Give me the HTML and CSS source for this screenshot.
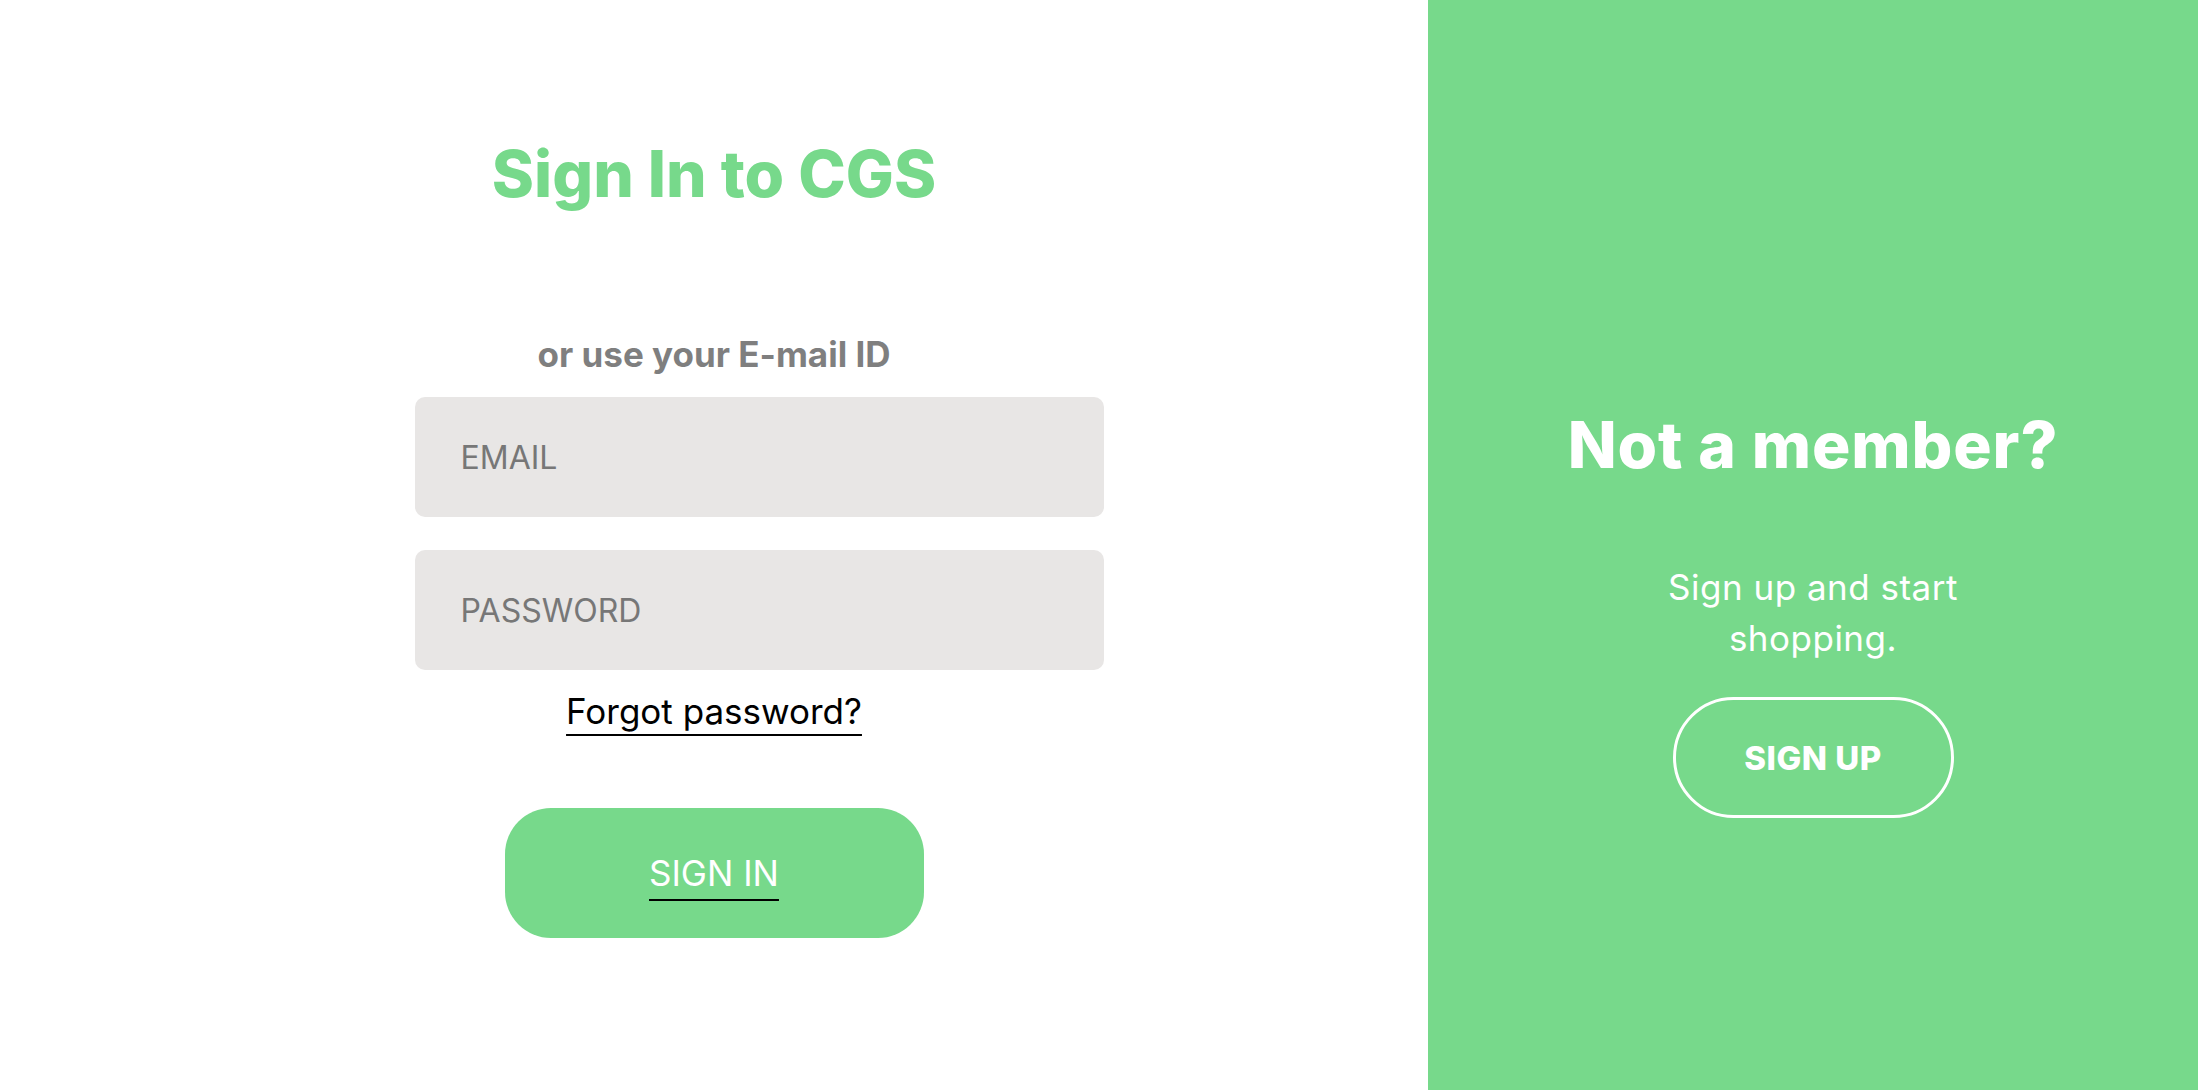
FILE: index.html
```html
<!DOCTYPE html>
<html lang="en">
<head>
<meta charset="utf-8">
<title>Sign In to CGS</title>
<link rel="stylesheet" href="styles.css">
</head>
<body>
<main class="page">
  <section class="signin">
    <h1 class="title">Sign In to CGS</h1>
    <p class="subtitle">or use your E-mail ID</p>
    <form class="fields">
      <div class="field">EMAIL</div>
      <div class="field field-gap">PASSWORD</div>
    </form>
    <a class="forgot" href="#">Forgot password?</a>
    <button class="btn-signin" type="button"><span class="btn-signin-label">SIGN IN</span></button>
  </section>
  <aside class="promo">
    <h2 class="promo-title">Not a member?</h2>
    <p class="promo-text">Sign up and start<br>shopping.</p>
    <button class="btn-signup" type="button">SIGN UP</button>
  </aside>
</main>
</body>
</html>
```
FILE: styles.css
```css
html, body {
  margin: 0;
  padding: 0;
  height: 100%;
}
body {
  font-family: Inter, "Open Sans", "DejaVu Sans", sans-serif;
  background: #ffffff;
}
.page {
  display: flex;
  height: 1090px;
}
.signin {
  flex: 0 0 1428px;
  display: flex;
  flex-direction: column;
  align-items: center;
  box-sizing: border-box;
  padding-top: 138px;
}
.title {
  margin: 0;
  font-size: 64px;
  line-height: 72px;
  font-weight: 800;
  color: #77d98b;
  letter-spacing: 0;
}
.subtitle {
  margin: 0;
  margin-top: 124px;
  font-size: 35px;
  line-height: 40px;
  font-weight: 700;
  color: #7f7f7f;
  letter-spacing: 0;
}
.fields {
  display: flex;
  flex-direction: column;
  width: 689px;
  margin: 23px 0 0 90px;
}
.field {
  box-sizing: border-box;
  height: 120px;
  background: #e8e6e5;
  border-radius: 10px;
  padding-left: 46px;
  display: flex;
  align-items: center;
  font-size: 32px;
  color: #777777;
}
.field-gap {
  margin-top: 33px;
}
.forgot {
  margin-top: 19px;
  font-size: 35px;
  line-height: 44px;
  color: #000000;
  text-decoration: underline;
  text-decoration-thickness: 2px;
  text-underline-offset: 10px;
}
.btn-signin {
  margin-top: 75px;
  width: 419px;
  height: 130px;
  border: none;
  border-radius: 46px;
  background: #77d98b;
  font-family: inherit;
  font-size: 35px;
  color: #ffffff;
  padding: 0;
}
.btn-signin-label {
  text-decoration: underline;
  text-decoration-color: #000000;
  text-decoration-thickness: 2px;
  text-underline-offset: 13px;
}
.promo {
  flex: 1;
  background: #77d98b;
  display: flex;
  flex-direction: column;
  align-items: center;
  box-sizing: border-box;
  padding-top: 410px;
  color: #ffffff;
}
.promo-title {
  margin: 0;
  font-size: 64px;
  line-height: 70px;
  font-weight: 800;
  letter-spacing: 0.9px;
}
.promo-text {
  margin: 82px 0 0;
  font-size: 35px;
  line-height: 51px;
  letter-spacing: 0.5px;
  text-align: center;
}
.btn-signup {
  margin-top: 33px;
  width: 281px;
  height: 121px;
  border: 3px solid #ffffff;
  border-radius: 61px;
  background: transparent;
  color: #ffffff;
  font-family: inherit;
  font-size: 33px;
  font-weight: 800;
  letter-spacing: 0.5px;
  padding: 0;
}
```
